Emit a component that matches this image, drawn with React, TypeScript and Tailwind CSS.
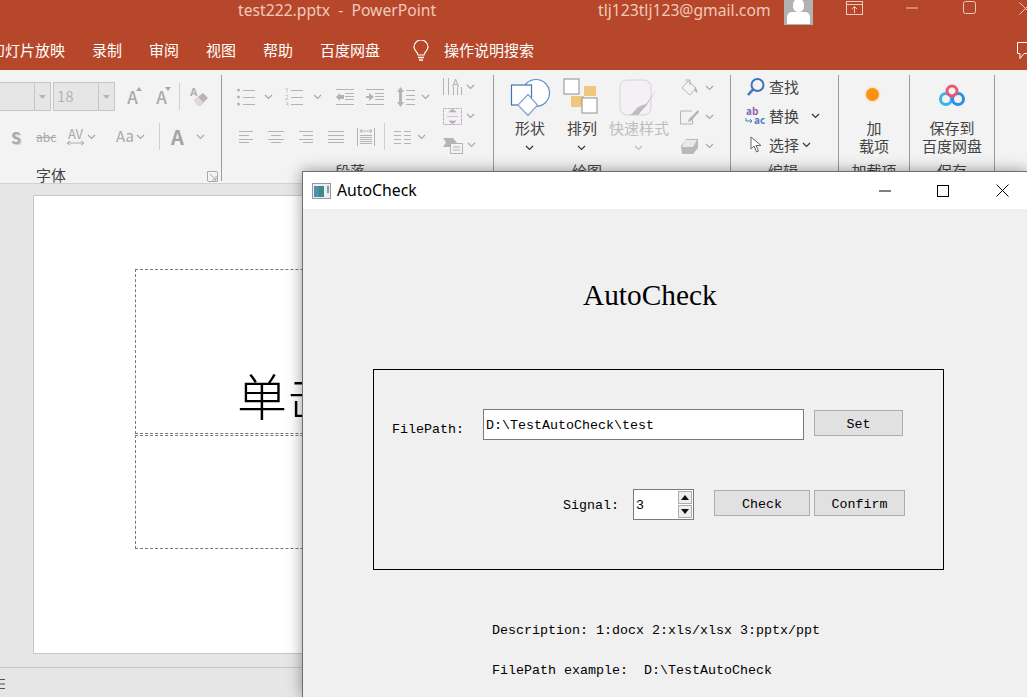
import React from "react";

const ui = { fontFamily: '"Noto Sans", "Noto Sans CJK SC", sans-serif' };
const cjk = { fontFamily: '"Noto Sans CJK SC", "Noto Sans", sans-serif' };
const mono = { fontFamily: '"Liberation Mono", monospace' };

function Chev({ c = "#a8a8a8", className = "" }: { c?: string; className?: string }) {
  return (
    <svg width="9" height="6" viewBox="0 0 9 6" className={className}>
      <path d="M1 1l3.5 3.5L8 1" fill="none" stroke={c} strokeWidth="1.2" />
    </svg>
  );
}

const G = "#b4b4b4";

function Lines({ w = 16, ys, xs, stroke = G }: { w?: number; ys: number[]; xs?: [number, number][]; stroke?: string }) {
  return (
    <svg width={w} height="16" viewBox={`0 0 ${w} 16`}>
      {ys.map((y, i) => {
        const x = xs ? xs[i % xs.length] : ([0, w] as [number, number]);
        return <line key={i} x1={x[0]} x2={x[1]} y1={y + 0.5} y2={y + 0.5} stroke={stroke} />;
      })}
    </svg>
  );
}

function Bullets() {
  return (
    <svg width="18" height="18" viewBox="0 0 18 18">
      {[2, 9, 16].map((y) => (
        <g key={y}>
          <circle cx="1.5" cy={y} r="1.5" fill={G} />
          <line x1="6" x2="18" y1={y + 0.5} y2={y + 0.5} stroke={G} />
        </g>
      ))}
    </svg>
  );
}

function Numbered() {
  return (
    <svg width="18" height="18" viewBox="0 0 18 18">
      {[2, 9, 16].map((y, i) => (
        <g key={y}>
          <text x="0" y={y + 2.5} fontSize="6.500" fill={G} fontFamily="Noto Sans, sans-serif">{i + 1}</text>
          <line x1="6" x2="18" y1={y + 0.5} y2={y + 0.5} stroke={G} />
        </g>
      ))}
    </svg>
  );
}

function Indent({ flip = false }: { flip?: boolean }) {
  return (
    <svg width="18" height="18" viewBox="0 0 18 18">
      {[1, 16].map((y) => (
        <line key={y} x1="0" x2="18" y1={y + 0.5} y2={y + 0.5} stroke={G} />
      ))}
      {[5, 8, 11].map((y) => (
        <line key={y} x1="9" x2="18" y1={y + 0.5} y2={y + 0.5} stroke={G} />
      ))}
      {flip ? (
        <path d="M0 8h3V5l5 4-5 4v-3H0z" fill={G} />
      ) : (
        <path d="M8 7H4V5L0 9l4 4v-2h4z" fill={G} />
      )}
    </svg>
  );
}

function LineSpacing() {
  return (
    <svg width="18" height="20" viewBox="0 0 18 20">
      <path d="M3.500 0L7 5H5v10h2l-3.500 5L0 15h2V5H0z" fill={G} />
      {[3, 8, 12, 17].map((y) => (
        <line key={y} x1="9" x2="18" y1={y + 0.5} y2={y + 0.5} stroke={G} />
      ))}
    </svg>
  );
}

function JustifyIcon() {
  return (
    <svg width="18" height="18" viewBox="0 0 18 18">
      <path d="M0.500 0v18M17.500 0v18" stroke={G} />
      <path d="M3 3h12M5 1L3 3l2 2M13 1l2 2-2 2" fill="none" stroke={G} />
      {[7, 9, 11, 13, 15].map((y) => (
        <line key={y} x1="3" x2="15" y1={y + 0.5} y2={y + 0.5} stroke={G} />
      ))}
    </svg>
  );
}

function Columns() {
  return (
    <svg width="17" height="14" viewBox="0 0 17 14">
      {[1, 5, 9, 13].map((y) => (
        <g key={y}>
          <line x1="0" x2="7" y1={y + 0.5} y2={y + 0.5} stroke={G} />
          <line x1="10" x2="17" y1={y + 0.5} y2={y + 0.5} stroke={G} />
        </g>
      ))}
    </svg>
  );
}

function Sep() {
  return <div className="w-px h-[27px] bg-[#cfcfcf]" />;
}

function Combo({ w, text }: { w: number; text?: string }) {
  return (
    <div
      className="flex h-[29px] items-stretch border border-[#c6c6c6] bg-[#e6e6e6] text-[#b4b4b4] text-[15px]"
      style={{ width: w }}
    >
      <div className="flex-1 flex items-center pl-[3px]">{text}</div>
      <div className="w-4 border-l border-[#c6c6c6] flex items-center justify-center">
        <svg width="7" height="4" viewBox="0 0 7 4">
          <path d="M0 0h7L3.500 4z" fill="#b4b4b4" />
        </svg>
      </div>
    </div>
  );
}

function GrowA({ down = false }: { down?: boolean }) {
  return (
    <div className="relative w-[13px] h-[22px] text-[#a9a9a9] text-[17px] leading-[22px] font-medium text-center">
      A
      <svg width="6" height="4" viewBox="0 0 6 4" className="absolute right-[-3px] top-[1px]">
        <path d={down ? "M0 0h6L3 4z" : "M3 0l3 4H0z"} fill="#a9a9a9" />
      </svg>
    </div>
  );
}

function Eraser() {
  return (
    <svg width="19" height="22" viewBox="0 0 19 22">
      <text x="0" y="10" fontSize="11" fontWeight="600" fill="#aaaaaa" fontFamily="Noto Sans, sans-serif">A</text>
      <path d="M4 14l9-7 5 5-8 8H8z" fill="#c2b0b8" />
      <path d="M4 14l4-3 5 5-3 4H8z" fill="#dcdcdc" />
    </svg>
  );
}

function GroupLabel({ children, className = "" }: { children: React.ReactNode; className?: string }) {
  return <div className={`text-[15px] leading-[20px] text-[#444] whitespace-nowrap ${className}`}>{children}</div>;
}

function FontGroup() {
  return (
    <div className="w-[222px] h-[106px] shrink-0 flex flex-col border-r border-[#9c9c9c] pt-[7px] relative">
      <div className="flex items-center h-[29px]">
        <div className="-ml-[15px]">
          <Combo w={66} />
        </div>
        <div className="ml-[2px]">
          <Combo w={62} text="18" />
        </div>
        <div className="ml-[11px]">
          <GrowA />
        </div>
        <div className="ml-[16px]">
          <GrowA down />
        </div>
        <div className="ml-[11px]">
          <Sep />
        </div>
        <div className="ml-[10px]">
          <Eraser />
        </div>
      </div>
      <div className="flex items-center h-[29px] mt-[11px] text-[#aaaaaa]">
        <span className="ml-[11px] w-[12px] text-[16px] font-bold" style={{ textShadow: "1px 1px 1px #cccccc" }}>S</span>
        <span className="ml-[13px] w-[20px] text-[12px] leading-none line-through">abc</span>
        <div className="ml-[11px] w-[17px] flex flex-col items-center leading-none">
          <span className="text-[13px] leading-[13px]">AV</span>
          <svg width="17" height="6" viewBox="0 0 17 6">
            <path d="M0 3h17M3 1L0 3l3 2M14 1l3 2-3 2" fill="none" stroke="#aaaaaa" />
          </svg>
        </div>
        <Chev className="ml-[3px]" />
        <span className="ml-[20px] w-[18px] text-[15px]">Aa</span>
        <Chev className="ml-[2px]" />
        <div className="ml-[14px]"><Sep /></div>
        <span className="ml-[11px] w-[15px] text-[20px] font-bold text-[#a4a4a4]">A</span>
        <Chev className="ml-[10px]" />
      </div>
      <div className="flex items-center mt-[14px] relative">
        <GroupLabel className="ml-[36px]">字体</GroupLabel>
        <svg width="11" height="11" viewBox="0 0 11 11" className="ml-[141px] mt-[2px]">
          <path d="M0.500 10V0.500H10M10.500 1v9.500H1M3 3l6 6M9 5v4H5" fill="none" stroke="#a9a9a9" />
        </svg>
      </div>
    </div>
  );
}

function ParagraphGroup() {
  return (
    <div className="w-[272px] h-[106px] shrink-0 border-r border-[#9c9c9c] flex flex-col relative">
      <div className="flex h-[87px]">
        <div className="w-[216px] flex flex-col pt-[7px]">
          <div className="flex items-center h-[29px]">
            <div className="ml-[15px]"><Bullets /></div>
            <Chev className="ml-[9px]" />
            <div className="ml-[12px]"><Numbered /></div>
            <Chev className="ml-[10px]" />
            <div className="ml-[14px]"><Indent /></div>
            <div className="ml-[12px]"><Indent flip /></div>
            <div className="ml-[13px]"><LineSpacing /></div>
            <Chev className="ml-[6px]" />
          </div>
          <div className="flex items-center h-[29px] mt-[11px]">
            <div className="ml-[17px]"><Lines w={14} ys={[2, 6, 10, 13]} xs={[[0, 14], [0, 10]]} /></div>
            <div className="ml-[15px]"><Lines w={16} ys={[2, 6, 10, 13]} xs={[[0, 16], [3, 13]]} /></div>
            <div className="ml-[15px]"><Lines w={14} ys={[2, 6, 10, 13]} xs={[[0, 14], [4, 14]]} /></div>
            <div className="ml-[15px]"><Lines w={16} ys={[2, 6, 10, 13]} /></div>
            <div className="ml-[13px]"><JustifyIcon /></div>
            <div className="ml-[9px]"><Sep /></div>
            <div className="ml-[9px]"><Columns /></div>
            <Chev className="ml-[6px]" />
          </div>
        </div>
        <div className="flex flex-col pt-[2px] gap-[9px]">
          <div className="flex items-center h-[20px] ml-[5px]">
            <svg width="19" height="20" viewBox="0 0 19 20">
              <path d="M0.500 1v17M5.500 1v17M10.500 10v8M14.500 10v8M18.500 10v8" stroke={G} />
              <text x="9" y="10" fontSize="11" fill={G} fontFamily="Noto Sans, sans-serif">A</text>
            </svg>
            <Chev className="ml-[4px]" />
          </div>
          <div className="flex items-center h-[20px] ml-[5px]">
            <svg width="19" height="17" viewBox="0 0 19 17">
              <rect x="0.500" y="0.500" width="18" height="16" fill="#f6f0f6" stroke={G} strokeDasharray="3 1" />
              <path d="M9.500 1L6 4h7zM9.500 16L6 13h7zM4 8.500h11" fill={G} stroke={G} strokeWidth="0.700" />
            </svg>
            <Chev className="ml-[4px]" />
          </div>
          <div className="flex items-center h-[20px] ml-[5px]">
            <svg width="20" height="17" viewBox="0 0 20 17">
              <path d="M0 1h10l4 5-3 4H0l3-4.500z" fill={G} />
              <rect x="7.500" y="6.500" width="12" height="10" fill="#f3f3f3" stroke={G} />
              <path d="M10 10h7M10 13h7" stroke={G} />
            </svg>
            <Chev className="ml-[4px]" />
          </div>
        </div>
      </div>
      <GroupLabel className="ml-[113px] mt-[3px]">段落</GroupLabel>
    </div>
  );
}

function BigLabel({ text, color = "#444", className = "" }: { text: string; color?: string; className?: string }) {
  return (
    <div className={`flex flex-col items-center ${className}`}>
      <span className="text-[15px] leading-[20px]" style={{ color }}>{text}</span>
      <Chev c={color === "#444" ? "#333" : color} className="mt-[7px]" />
    </div>
  );
}

function DrawGroup() {
  return (
    <div className="w-[237px] h-[106px] shrink-0 border-r border-[#9c9c9c] flex flex-col">
      <div className="flex h-[87px]">
        <div className="w-[72px] flex flex-col items-center pt-[3px] shrink-0">
          <svg width="40" height="40" viewBox="0 0 40 40">
            <circle cx="26" cy="15" r="13.500" fill="#fff" stroke="#5b8cc4" strokeWidth="1.200" />
            <rect x="1.500" y="7" width="20" height="20" fill="#fff" stroke="#3f74b5" strokeWidth="1.200" />
            <path d="M18 16.500l9.500 10.500L18 37.500 8 27z" fill="#fff" stroke="#7fa5d2" strokeWidth="1.200" />
          </svg>
          <BigLabel text="形状" />
        </div>
        <div className="w-[32px] flex flex-col items-center pt-[3px] shrink-0">
          <svg width="38" height="37" viewBox="0 0 38 37" className="shrink-0">
            <rect x="21" y="8" width="12" height="10" fill="#f0c77f" />
            <rect x="8" y="18" width="13" height="11" fill="#f0c77f" />
            <rect x="1" y="1" width="15" height="15" fill="#fff" stroke="#8e8e8e" />
            <rect x="19" y="20" width="15" height="15" fill="#fff" stroke="#8e8e8e" />
          </svg>
          <BigLabel text="排列" className="mt-[3px]" />
        </div>
        <div className="w-[82px] flex flex-col items-center pt-[4px] shrink-0">
          <svg width="40" height="38" viewBox="0 0 40 38">
            <rect x="1" y="1" width="31" height="35" rx="7" fill="#f5f0f6" stroke="#d4d4d4" />
            <path d="M38 10l-11 17-8 9H10c5-1 6-7 11-9l6-2z" fill="#bdbdbd" />
          </svg>
          <BigLabel text="快速样式" color="#bdbdbd" className="mt-[1px] whitespace-nowrap" />
        </div>
        <div className="flex flex-col pt-[3px] gap-[9px]">
          <div className="flex items-center h-[20px]">
            <svg width="19" height="18" viewBox="0 0 19 18">
              <path d="M8 2l8 7-6 7-8-7z" fill="none" stroke="#b4b4b4" />
              <path d="M5 1h5v5" fill="none" stroke="#b4b4b4" />
              <path d="M15 8c2 2 3 4 2 6-2-1-3-3-2-6z" fill="#b4b4b4" />
            </svg>
            <Chev className="ml-[6px]" />
          </div>
          <div className="flex items-center h-[20px]">
            <svg width="19" height="15" viewBox="0 0 19 15">
              <path d="M12 1H0.500v13h12V8" fill="none" stroke="#b4b4b4" />
              <path d="M18 0l1 2-8 9-3 1 1-3z" fill="#b4b4b4" />
            </svg>
            <Chev className="ml-[6px]" />
          </div>
          <div className="flex items-center h-[20px]">
            <svg width="19" height="17" viewBox="0 0 19 17">
              <path d="M6 1h12v9l-5 6H2L1 8z" fill="#b9b9b9" />
              <path d="M5 2h12l-4 7H2z" fill="#e9e9e9" />
            </svg>
            <Chev className="ml-[6px]" />
          </div>
        </div>
      </div>
      <GroupLabel className="ml-[78px] mt-[3px]">绘图</GroupLabel>
    </div>
  );
}

function EditGroup() {
  return (
    <div className="w-[108px] h-[106px] shrink-0 border-r border-[#9c9c9c] flex flex-col">
      <div className="h-[87px] flex flex-col pt-[2px] gap-[9px] text-[15px] text-[#444]">
        <div className="flex items-center h-[20px]">
          <svg width="18" height="18" viewBox="0 0 18 18" className="ml-[16px]">
            <circle cx="10.500" cy="7" r="6" fill="none" stroke="#3f74b5" strokeWidth="2" />
            <path d="M6 11.500L1 17" stroke="#3f74b5" strokeWidth="2.600" />
          </svg>
          <span className="ml-[4px]">查找</span>
        </div>
        <div className="flex items-center h-[20px]">
          <div className="ml-[14px] w-[20px] h-[20px] relative flex flex-col text-[10px] leading-[9px] font-semibold">
            <span className="text-[#8a63b8] ml-[1px]">ab</span>
            <span className="text-[#4a7fc0] ml-[9px]">ac</span>
            <svg width="8" height="7" viewBox="0 0 8 7" className="absolute left-0 bottom-[1px]">
              <path d="M1 0v3h6M5 1l2 2-2 2" fill="none" stroke="#4a7fc0" />
            </svg>
          </div>
          <span className="ml-[4px]">替换</span>
          <Chev c="#333" className="ml-[12px]" />
        </div>
        <div className="flex items-center h-[20px]">
          <svg width="12" height="18" viewBox="0 0 12 18" className="ml-[19px]">
            <path d="M1 1v12l3-3 2.500 6 2-1-2.500-5.500H11z" fill="#fff" stroke="#666" />
          </svg>
          <span className="ml-[7px]">选择</span>
          <Chev c="#333" className="ml-[3px]" />
        </div>
      </div>
      <GroupLabel className="ml-[37px] mt-[3px]">编辑</GroupLabel>
    </div>
  );
}

function AddinGroup() {
  return (
    <div className="w-[71px] h-[106px] shrink-0 border-r border-[#9c9c9c] flex flex-col items-center">
      <div className="h-[87px] flex flex-col items-center text-[15px] leading-[18px] text-[#444]">
        <div className="w-[13px] h-[13px] rounded-full bg-[#fb9211] mt-[13px] mr-[3px] shadow-[0_0_3px_#fbc271]" />
        <span className="mt-[18px]">加</span>
        <span>载项</span>
      </div>
      <GroupLabel className="mt-[3px]">加载项</GroupLabel>
    </div>
  );
}

function SaveGroup() {
  return (
    <div className="w-[85px] h-[106px] shrink-0 border-r border-[#9c9c9c] flex flex-col items-center">
      <div className="h-[87px] flex flex-col items-center text-[15px] leading-[18px] text-[#444]">
        <svg width="28" height="23" viewBox="0 0 28 23" className="mt-[9px]">
          <circle cx="8" cy="15" r="5.500" fill="none" stroke="#35b5ef" strokeWidth="3" />
          <circle cx="20" cy="15" r="5.500" fill="none" stroke="#2a8fe6" strokeWidth="3" />
          <circle cx="14" cy="7" r="5" fill="none" stroke="#f2566f" strokeWidth="3" />
        </svg>
        <span className="mt-[12px]">保存到</span>
        <span>百度网盘</span>
      </div>
      <GroupLabel className="mt-[3px]">保存</GroupLabel>
    </div>
  );
}

function WinMin() {
  return (
    <svg width="12" height="2" viewBox="0 0 12 2"><line x1="0" x2="12" y1="1" y2="1" stroke="currentColor" /></svg>
  );
}

function Dialog() {
  const btn = "flex items-center justify-center h-[26px] pt-[3px] border border-[#adadad] bg-[#e1e1e1] text-black text-[13.33px]";
  return (
    <div
      className="absolute left-[302px] top-[171px] w-[725px] h-[526px] bg-[#f0f0f0] border-t border-l border-[#6f6f6f] shadow-[0_0_14px_rgba(0,0,0,0.4)]"
    >
      <div className="h-[37px] bg-white flex items-center relative" style={ui}>
        <svg width="19" height="16" viewBox="0 0 19 16" className="ml-[9px] shrink-0">
          <rect x="0.500" y="0.500" width="18" height="15" fill="#e9eef0" stroke="#8d9aa3" />
          <rect x="2" y="3" width="10" height="11" fill="#3f8a84" />
          <rect x="2" y="3" width="5" height="11" fill="#4f8fb0" />
          <rect x="15" y="3" width="2" height="7" fill="#7fa0a8" />
        </svg>
        <span className="ml-[6px] text-[15.8px] text-black">AutoCheck</span>
        <div className="ml-auto flex items-center text-black">
          <div className="w-[12px] mr-[46px] flex"><WinMin /></div>
          <svg width="12" height="12" viewBox="0 0 12 12" className="mr-[47px]">
            <rect x="0.500" y="0.500" width="11" height="11" fill="none" stroke="currentColor" />
          </svg>
          <svg width="13" height="13" viewBox="0 0 13 13" className="mr-[18px]">
            <path d="M0.500 0.500l12 12M12.500 0.500l-12 12" fill="none" stroke="currentColor" />
          </svg>
        </div>
      </div>
      <div
        className="ml-[280px] mt-[68px] text-[29.33px] leading-[36px] text-black"
        style={{ fontFamily: '"Liberation Serif", serif' }}
      >
        AutoCheck
      </div>
      <div className="ml-[70px] mt-[56px] w-[571px] h-[201px] border border-black flex flex-col" style={mono}>
        <div className="flex items-start mt-[39px] text-[13.33px] text-black">
          <span className="ml-[18px] mt-[11px] w-[91px]">FilePath:</span>
          <div className="w-[321px] h-[31px] border border-[#7a7a7a] bg-white pl-[2px] flex items-center pt-[2px]">
            D:\TestAutoCheck\test
          </div>
          <div className={`${btn} ml-[10px] w-[89px] mt-[1px]`}>Set</div>
        </div>
        <div className="flex items-start mt-[49px] text-[13.33px] text-black">
          <span className="ml-[189px] mt-[7px] w-[70px]">Signal:</span>
          <div className="w-[61px] h-[31px] border border-[#7a7a7a] bg-white flex items-center">
            <span className="ml-[2px] flex-1 pt-[2px]">3</span>
            <div className="w-[14px] h-[27px] mr-[1px] flex flex-col gap-px">
              <div className="flex-1 border border-[#adadad] bg-[#eeeeee] flex items-center justify-center">
                <svg width="8" height="5" viewBox="0 0 8 5"><path d="M4 0l4 5H0z" fill="#111" /></svg>
              </div>
              <div className="flex-1 border border-[#adadad] bg-[#eeeeee] flex items-center justify-center">
                <svg width="8" height="5" viewBox="0 0 8 5"><path d="M0 0h8L4 5z" fill="#111" /></svg>
              </div>
            </div>
          </div>
          <div className={`${btn} ml-[20px] w-[96px] mt-[1px]`}>Check</div>
          <div className={`${btn} ml-[4px] w-[91px] mt-[1px]`}>Confirm</div>
        </div>
      </div>
      <div className="ml-[189px] mt-[53px] text-[13.33px] leading-[16px] text-black flex flex-col gap-[24px] whitespace-pre" style={mono}>
        <span>Description: 1:docx 2:xls/xlsx 3:pptx/ppt</span>
        <span>FilePath example:  D:\TestAutoCheck</span>
      </div>
    </div>
  );
}

export default function App() {
  return (
    <div className="relative w-[1027px] h-[697px] overflow-hidden bg-[#e6e6e6] flex flex-col" style={cjk}>
      <div className="h-[70px] bg-[#b7472a] shrink-0 flex flex-col">
        <div className="h-[32px] flex items-start text-[15.7px] leading-[20px] text-[#f1c9bc]" style={ui}>
          <span className="ml-[238px] whitespace-pre">test222.pptx  -  PowerPoint</span>
          <span className="absolute left-[598px] top-0">tlj123tlj123@gmail.com</span>
          <div className="absolute left-[784px] top-0 w-[29px] h-[25px] bg-[#b2b2b2] overflow-hidden flex flex-col items-center">
            <div className="w-[11px] h-[13px] rounded-full bg-white -mt-[1px]" />
            <div className="w-[23px] h-[12px] rounded-t-[5px] bg-white" />
          </div>
          <svg width="17" height="14" viewBox="0 0 17 14" className="absolute left-[846px] top-[1px]">
            <rect x="0.500" y="0.500" width="16" height="13" fill="none" stroke="#f1c9bc" />
            <path d="M0.500 3.500h16M8.500 12V6M6 8l2.500-2.500L11 8" fill="none" stroke="#f1c9bc" />
          </svg>
          <svg width="12" height="2" viewBox="0 0 12 2" className="absolute left-[906px] top-[7px]">
            <line x1="0" x2="12" y1="1" y2="1" stroke="#f1c9bc" />
          </svg>
          <svg width="13" height="13" viewBox="0 0 13 13" className="absolute left-[963px] top-[1px]">
            <rect x="0.500" y="0.500" width="12" height="12" rx="2" fill="none" stroke="#f1c9bc" />
          </svg>
          <svg width="13" height="13" viewBox="0 0 13 13" className="absolute left-[1019px] top-[2px]">
            <path d="M0.500 0.500l12 12M12.500 0.500l-12 12" fill="none" stroke="#f1c9bc" />
          </svg>
        </div>
        <div className="h-[37px] flex items-center text-[15px] text-white gap-[27px] whitespace-nowrap relative">
          <span className="-ml-[10px]">幻灯片放映</span>
          <span>录制</span>
          <span>审阅</span>
          <span>视图</span>
          <span>帮助</span>
          <span>百度网盘</span>
          <svg width="16" height="21" viewBox="0 0 16 21" className="ml-[6px]">
            <path d="M5 15c0-3-4-4-4-8a7 7 0 0 1 14 0c0 4-4 5-4 8z" fill="none" stroke="#fff" strokeWidth="1.200" />
            <path d="M5 17.500h6M6 20h4" stroke="#fff" strokeWidth="1.400" />
          </svg>
          <span className="-ml-[12px]">操作说明搜索</span>
          <svg width="14" height="18" viewBox="0 0 14 18" className="absolute left-[1017px] top-[10px]">
            <path d="M0.500 0.500h13v11H7l-4 5v-5H0.500z" fill="none" stroke="#fff" />
          </svg>
        </div>
      </div>

      <div className="h-[114px] bg-[#f3f3f3] shrink-0 flex pt-[5px] border-b border-[#d2d2d2]" style={cjk}>
        <FontGroup />
        <ParagraphGroup />
        <DrawGroup />
        <EditGroup />
        <AddinGroup />
        <SaveGroup />
      </div>

      <div className="flex-1 min-h-0 pl-[33px] pt-[11px]">
        <div className="w-[900px] h-[459px] bg-white border border-[#c6c6c6] pl-[101px] pt-[73px] flex flex-col">
          <div className="w-[700px] h-[165px] border border-dashed border-[#777] flex items-center pl-[101px] pt-[86px] text-[50px] font-light text-black whitespace-nowrap">
            单击此处添加标题
          </div>
          <div className="w-[700px] h-[114px] mt-px border border-dashed border-[#777]" />
        </div>
      </div>

      <div className="h-[30px] shrink-0 border-t border-[#c6c6c6] bg-[#e6e6e6] flex items-center">
        <svg width="6" height="12" viewBox="0 0 6 12" className="mt-[2px]">
          <path d="M0 1.500h5M0 6h5M0 10.500h5" stroke="#555" />
        </svg>
      </div>

      <Dialog />
    </div>
  );
}
